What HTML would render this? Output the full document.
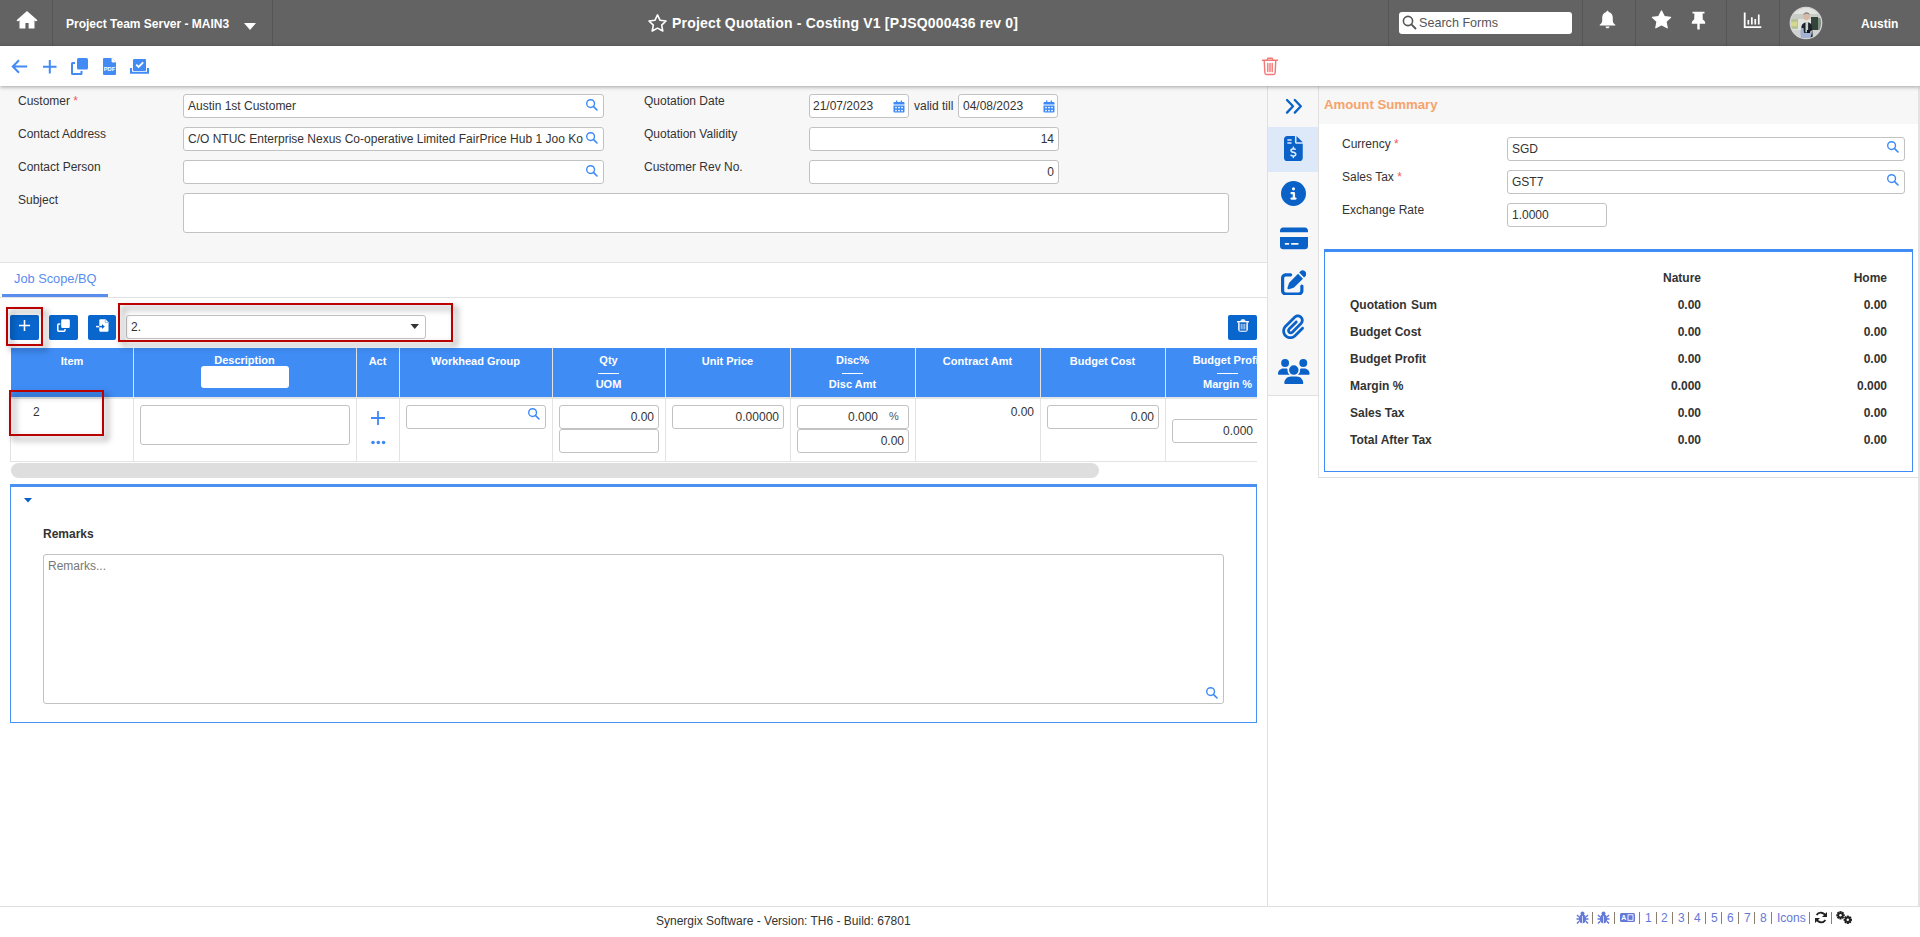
<!DOCTYPE html>
<html><head><meta charset="utf-8">
<style>
html,body{margin:0;padding:0}
body{width:1920px;height:937px;overflow:hidden;position:relative;font-family:"Liberation Sans",sans-serif;background:#fff;color:#333}
.a{position:absolute}
.t12{position:absolute;font-size:12px;line-height:14px;white-space:nowrap}
.b11{position:absolute;font-size:11px;font-weight:bold;line-height:13px;white-space:nowrap}
.b12{position:absolute;font-size:12px;font-weight:bold;line-height:14px;white-space:nowrap}
.inp{position:absolute;background:#fff;border:1px solid #c2c2c2;border-radius:3px;box-sizing:border-box}
.sep{position:absolute;top:0;width:1px;height:46px;background:#565656}
svg{position:absolute;display:block;z-index:6}
</style></head><body>

<!-- HEADER -->
<div class="a" style="left:0;top:0;width:1920px;height:46px;background:#636363"></div>
<div class="sep" style="left:52px"></div>
<div class="sep" style="left:272px"></div>
<div class="sep" style="left:1388px"></div>
<div class="sep" style="left:1582px"></div>
<div class="sep" style="left:1635px"></div>
<div class="sep" style="left:1726px"></div>
<div class="sep" style="left:1779px"></div>
<svg style="left:16px;top:10px" width="22" height="19" viewBox="0 0 22 19"><path fill="#fff" d="M11 1 L21.5 10.2 L20 11.6 L18.5 10.3 L18.5 18.5 L12.6 18.5 L12.6 13 L9.4 13 L9.4 18.5 L3.5 18.5 L3.5 10.3 L2 11.6 L0.5 10.2 Z"/></svg>
<div class="b12" style="left:66px;top:17px;color:#fff">Project Team Server - MAIN3</div>
<svg style="left:243px;top:22px" width="14" height="9" viewBox="0 0 14 9"><path fill="#fff" d="M1 1 L13 1 L7 8 Z"/></svg>
<svg style="left:647px;top:13px" width="21" height="20" viewBox="0 0 21 20"><path fill="none" stroke="#fff" stroke-width="1.6" stroke-linejoin="round" d="M10.5 1.9 L13.1 7.3 L19 8 L14.7 12.1 L15.8 18 L10.5 15.1 L5.2 18 L6.3 12.1 L2 8 L7.9 7.3 Z"/></svg>
<div class="a" style="left:672px;top:15px;font-size:14px;line-height:16px;font-weight:bold;color:#fff;white-space:nowrap;letter-spacing:0.19px">Project Quotation - Costing V1 [PJSQ000436 rev 0]</div>
<div class="a" style="left:1399px;top:12px;width:173px;height:22px;background:#fff;border-radius:3px"></div>
<svg style="left:1402px;top:15px" width="15" height="15" viewBox="0 0 15 15"><circle cx="6" cy="6" r="4.6" fill="none" stroke="#555" stroke-width="1.6"/><path d="M9.4 9.4 L13.5 13.5" stroke="#555" stroke-width="1.8" stroke-linecap="round"/></svg>
<div class="a" style="left:1419px;top:16px;font-size:12.6px;line-height:15px;color:#555;white-space:nowrap">Search Forms</div>
<svg style="left:1599px;top:10px" width="17" height="19" viewBox="0 0 17 19"><path fill="#fff" d="M8.5 0.8 C9.3 0.8 9.6 1.4 9.6 2 C12.3 2.6 13.8 4.8 13.8 7.6 L13.8 11 C13.8 12.4 14.8 13.6 16.3 14.8 L16.3 15.6 L0.7 15.6 L0.7 14.8 C2.2 13.6 3.2 12.4 3.2 11 L3.2 7.6 C3.2 4.8 4.7 2.6 7.4 2 C7.4 1.4 7.7 0.8 8.5 0.8 Z M6.5 16.4 L10.5 16.4 C10.5 17.5 9.6 18.3 8.5 18.3 C7.4 18.3 6.5 17.5 6.5 16.4 Z"/></svg>
<svg style="left:1651px;top:10px" width="21" height="19" viewBox="0 0 21 19"><path fill="#fff" stroke="#fff" stroke-width="1.2" stroke-linejoin="round" d="M10.5 1 L13.3 6.6 L19.6 7.4 L15 11.6 L16.2 17.8 L10.5 14.8 L4.8 17.8 L6 11.6 L1.4 7.4 L7.7 6.6 Z"/></svg>
<svg style="left:1691px;top:11px" width="15" height="19" viewBox="0 0 15 19"><path fill="#fff" d="M1.5 0.8 L13.5 0.8 L13.5 2.6 L11.6 2.6 L11.8 8.5 C13.2 9.4 14.2 10.6 14.2 12 L14.2 12.8 L0.8 12.8 L0.8 12 C0.8 10.6 1.8 9.4 3.2 8.5 L3.4 2.6 L1.5 2.6 Z M6.3 12.8 L8.7 12.8 L8.7 18.5 L6.3 18.5 Z"/></svg>
<svg style="left:1743px;top:12px" width="19" height="17" viewBox="0 0 19 17"><path fill="#fff" d="M0.8 0.5 L2.6 0.5 L2.6 14.3 L18.3 14.3 L18.3 16 L0.8 16 Z M4.5 8 L6.2 8 L6.2 12.6 L4.5 12.6 Z M8 5.2 L9.7 5.2 L9.7 12.6 L8 12.6 Z M11.4 7 L13.1 7 L13.1 12.6 L11.4 12.6 Z M14.9 2.6 L16.6 2.6 L16.6 12.6 L14.9 12.6 Z"/></svg>
<svg style="left:1789px;top:6px" width="34" height="34" viewBox="0 0 34 34">
<defs><clipPath id="av"><circle cx="17" cy="17" r="15.6"/></clipPath></defs>
<g clip-path="url(#av)">
<rect x="0" y="0" width="34" height="34" fill="#e2e4e0"/>
<rect x="0" y="8" width="34" height="5" fill="#c7ccc6"/>
<rect x="1" y="13" width="8" height="10" fill="#b9c39a"/>
<rect x="2" y="16" width="6" height="4" fill="#d6d98c"/>
<rect x="22" y="11" width="7" height="17" fill="#34443a"/>
<rect x="29" y="12" width="4" height="16" fill="#7f8f84"/>
<rect x="0" y="24" width="34" height="10" fill="#cfd2cf"/>
<ellipse cx="17.5" cy="10.5" rx="3" ry="3.8" fill="#d7b9a6"/>
<path d="M14.3 9 C14.2 5.6 20.8 5.4 20.8 9 C19.5 7.8 15.8 7.8 14.3 9 Z" fill="#8e8a88"/>
<path d="M12 34 L12.5 20 C13.5 17 16 16 18 16.2 C20.5 16.4 22.5 17.5 23 20 L24 34 Z" fill="#1f242b"/>
<rect x="16.5" y="16" width="2.6" height="10" fill="#c5d3d1"/>
<path d="M12.5 22 C11 24 11 30 13 33 L21 33 C22 30 23 27 23.5 24 C21 26 18 27 15 27 L14.5 22 Z" fill="#a3b1d3"/>
<rect x="18" y="24" width="3" height="3" fill="#111"/>
</g>
<circle cx="17" cy="17" r="15.7" fill="none" stroke="#d4d4d4" stroke-width="1.3"/>
</svg>
<div class="b12" style="left:1861px;top:17px;color:#fff">Austin</div>


<!-- TOOLBAR -->
<div class="a" style="left:0;top:86px;width:1267px;height:176px;background:#f7f7f7;border-bottom:1px solid #e2e2e2"></div>
<div class="a" style="left:0;top:46px;width:1920px;height:40px;background:#fff;box-shadow:0 1px 4px rgba(0,0,0,0.35);z-index:5"></div>
<svg style="left:11px;top:59px" width="18" height="16" viewBox="0 0 18 16"><path d="M2 7.5 L16.2 7.5 M8 1.3 L1.8 7.5 L8 13.7" fill="none" stroke="#428bf5" stroke-width="2"/></svg>
<svg style="left:42px;top:59px" width="16" height="16" viewBox="0 0 16 16"><path d="M7.8 1 L7.8 14.5 M1 7.8 L14.5 7.8" fill="none" stroke="#428bf5" stroke-width="2"/></svg>
<svg style="left:70px;top:57px" width="19" height="19" viewBox="0 0 19 19"><rect x="7" y="1" width="11" height="11.5" rx="1.5" fill="#428bf5"/><path d="M5 6 L2.5 6 Q2 6 2 6.5 L2 16.5 Q2 17 2.5 17 L11 17 Q11.5 17 11.5 16.5 L11.5 14" fill="none" stroke="#428bf5" stroke-width="2"/></svg>
<svg style="left:102px;top:57px" width="15" height="19" viewBox="0 0 15 19"><path d="M2 1 L10 1 L14 5 L14 17 Q14 18 13 18 L2 18 Q1 18 1 17 L1 2 Q1 1 2 1 Z" fill="#428bf5"/><path d="M10 1 L10 5 L14 5" fill="#fff" stroke="#fff" stroke-width="0.8"/><text x="7.5" y="14.3" font-family="Liberation Sans" font-weight="bold" font-size="5.8" fill="#fff" text-anchor="middle">PDF</text></svg>
<svg style="left:129px;top:58px" width="22" height="18" viewBox="0 0 22 18"><rect x="4" y="1" width="13" height="12" rx="1" fill="#428bf5"/><path d="M7.2 6.6 L9.6 9 L14.2 4.4" fill="none" stroke="#fff" stroke-width="1.8"/><path d="M2 10 L2 14.8 L19 14.8 L19 10" fill="none" stroke="#428bf5" stroke-width="2.1"/></svg>
<svg style="left:1261px;top:57px" width="18" height="19" viewBox="0 0 18 19"><path d="M1.5 3.2 L16.5 3.2 M6 3 L7 1.2 L11 1.2 L12 3 M3.2 3.5 L3.9 16 Q4 17.5 5.5 17.5 L12.5 17.5 Q14 17.5 14.1 16 L14.8 3.5 M6.8 6.5 L6.8 14.5 M9 6.5 L9 14.5 M11.2 6.5 L11.2 14.5" fill="none" stroke="#f47676" stroke-width="1.4" stroke-linecap="round"/></svg>


<!-- FORM -->
<div class="t12" style="left:18px;top:94px">Customer <span style="color:#f05a5a">*</span></div>
<div class="t12" style="left:18px;top:127px">Contact Address</div>
<div class="t12" style="left:18px;top:160px">Contact Person</div>
<div class="t12" style="left:18px;top:193px">Subject</div>
<div class="inp" style="left:183px;top:94px;width:421px;height:24px"></div>
<div class="t12" style="left:188px;top:99px">Austin 1st Customer</div>
<svg style="left:585px;top:98px" width="13" height="13" viewBox="0 0 13 13"><circle cx="5.6" cy="5.6" r="3.9" fill="none" stroke="#3d8af7" stroke-width="1.4"/><path d="M8.4 8.4 L12 12" stroke="#3d8af7" stroke-width="1.6" stroke-linecap="round"/></svg>
<div class="inp" style="left:183px;top:127px;width:421px;height:24px"></div>
<div class="t12" style="left:188px;top:132px">C/O NTUC Enterprise Nexus Co-operative Limited FairPrice Hub 1 Joo Ko</div>
<svg style="left:585px;top:131px" width="13" height="13" viewBox="0 0 13 13"><circle cx="5.6" cy="5.6" r="3.9" fill="none" stroke="#3d8af7" stroke-width="1.4"/><path d="M8.4 8.4 L12 12" stroke="#3d8af7" stroke-width="1.6" stroke-linecap="round"/></svg>
<div class="inp" style="left:183px;top:160px;width:421px;height:24px"></div>
<svg style="left:585px;top:164px" width="13" height="13" viewBox="0 0 13 13"><circle cx="5.6" cy="5.6" r="3.9" fill="none" stroke="#3d8af7" stroke-width="1.4"/><path d="M8.4 8.4 L12 12" stroke="#3d8af7" stroke-width="1.6" stroke-linecap="round"/></svg>
<div class="inp" style="left:183px;top:193px;width:1046px;height:40px"></div>
<div class="t12" style="left:644px;top:94px">Quotation Date</div>
<div class="t12" style="left:644px;top:127px">Quotation Validity</div>
<div class="t12" style="left:644px;top:160px">Customer Rev No.</div>
<div class="inp" style="left:809px;top:94px;width:100px;height:24px"></div>
<div class="t12" style="left:813px;top:99px">21/07/2023</div>
<svg style="left:893px;top:100px" width="12" height="13" viewBox="0 0 12 13"><path d="M3 0.5 L4.3 0.5 L4.3 2 L7.7 2 L7.7 0.5 L9 0.5 L9 2 L10.5 2 Q11.5 2 11.5 3 L11.5 4.5 L0.5 4.5 L0.5 3 Q0.5 2 1.5 2 L3 2 Z M0.5 5.5 L11.5 5.5 L11.5 11.5 Q11.5 12.5 10.5 12.5 L1.5 12.5 Q0.5 12.5 0.5 11.5 Z" fill="#3d8af7"/><g fill="#fff"><circle cx="3" cy="7.6" r="0.9"/><circle cx="6" cy="7.6" r="0.9"/><circle cx="9" cy="7.6" r="0.9"/><circle cx="3" cy="10.6" r="0.9"/><circle cx="6" cy="10.6" r="0.9"/><circle cx="9" cy="10.6" r="0.9"/></g></svg>
<div class="t12" style="left:914px;top:99px">valid till</div>
<div class="inp" style="left:958px;top:94px;width:100px;height:24px"></div>
<div class="t12" style="left:963px;top:99px">04/08/2023</div>
<svg style="left:1043px;top:100px" width="12" height="13" viewBox="0 0 12 13"><path d="M3 0.5 L4.3 0.5 L4.3 2 L7.7 2 L7.7 0.5 L9 0.5 L9 2 L10.5 2 Q11.5 2 11.5 3 L11.5 4.5 L0.5 4.5 L0.5 3 Q0.5 2 1.5 2 L3 2 Z M0.5 5.5 L11.5 5.5 L11.5 11.5 Q11.5 12.5 10.5 12.5 L1.5 12.5 Q0.5 12.5 0.5 11.5 Z" fill="#3d8af7"/><g fill="#fff"><circle cx="3" cy="7.6" r="0.9"/><circle cx="6" cy="7.6" r="0.9"/><circle cx="9" cy="7.6" r="0.9"/><circle cx="3" cy="10.6" r="0.9"/><circle cx="6" cy="10.6" r="0.9"/><circle cx="9" cy="10.6" r="0.9"/></g></svg>
<div class="inp" style="left:809px;top:127px;width:250px;height:24px"></div>
<div class="t12" style="left:809px;top:132px;width:245px;text-align:right">14</div>
<div class="inp" style="left:809px;top:160px;width:250px;height:24px"></div>
<div class="t12" style="left:809px;top:165px;width:245px;text-align:right">0</div>

<!-- TABS -->
<div class="a" style="left:0;top:297px;width:1267px;height:1px;background:#e2e2e2"></div>
<div class="a" style="left:14px;top:271px;font-size:12.8px;line-height:15px;color:#5b8def;white-space:nowrap">Job Scope/BQ</div>
<div class="a" style="left:2px;top:294px;width:106px;height:3px;background:#5b8def"></div>

<!-- BUTTONS -->
<div class="a" style="left:10px;top:315px;width:29px;height:25px;background:#0866cc;border-radius:2px"></div>
<svg style="left:19px;top:320px" width="11" height="11" viewBox="0 0 11 11"><path d="M5.5 0 L5.5 11 M0 5.5 L11 5.5" stroke="#fff" stroke-width="1.6"/></svg>
<div class="a" style="left:49px;top:315px;width:29px;height:25px;background:#0866cc;border-radius:2px"></div>
<svg style="left:56px;top:319px" width="15" height="15" viewBox="0 0 15 15"><rect x="5.2" y="0.3" width="8.6" height="8.8" rx="1.3" fill="#fff"/><path d="M4.3 4.9 L2.7 4.9 Q1.8 4.9 1.8 5.8 L1.8 11.3 Q1.8 12.2 2.7 12.2 L8.1 12.2 Q9 12.2 9 11.3 L9 10" fill="none" stroke="#fff" stroke-width="1.5"/></svg>
<div class="a" style="left:88px;top:315px;width:28px;height:25px;background:#0866cc;border-radius:2px"></div>
<svg style="left:94px;top:318px" width="16" height="16" viewBox="0 0 16 16"><path d="M6.5 1.2 L11.5 1.2 L14.5 4.2 L14.5 12.5 Q14.5 13.7 13.3 13.7 L6.5 13.7 Q5.3 13.7 5.3 12.5 L5.3 2.4 Q5.3 1.2 6.5 1.2 Z" fill="#fff"/><path d="M11.2 1.5 L11.2 4.5 L14.2 4.5" fill="none" stroke="#7fb0e8" stroke-width="0.8"/><path d="M2 8.6 L5.3 8.6" stroke="#fff" stroke-width="1.5"/><path d="M5.3 8.6 L9 8.6" stroke="#0866cc" stroke-width="1.5"/><path d="M8 6.2 L10.8 8.6 L8 11 Z" fill="#0866cc"/></svg>
<div class="inp" style="left:126px;top:315px;width:300px;height:24px"></div>
<div class="t12" style="left:131px;top:320px">2.</div>
<svg style="left:410px;top:323px" width="10" height="7" viewBox="0 0 10 7"><path d="M0.5 1 L9 1 L4.75 6 Z" fill="#333"/></svg>
<div class="a" style="left:1228px;top:315px;width:29px;height:25px;background:#0866cc;border-radius:2px"></div>
<svg style="left:1237px;top:318px" width="12" height="14" viewBox="0 0 12 14"><path d="M3.2 3.6 Q3.4 1.1 6 1.1 Q8.6 1.1 8.8 3.6 Z" fill="#e6eefa"/><path d="M0.6 3.8 L11.4 3.8" stroke="#fff" stroke-width="1.4" stroke-linecap="round"/><path d="M1.9 4.2 L1.9 11.4 Q1.9 13.1 3.6 13.1 L8.4 13.1 Q10.1 13.1 10.1 11.4 L10.1 4.2" fill="none" stroke="#fff" stroke-width="1.5"/><path d="M4.2 5.6 L4.2 11.6 M6 5.6 L6 11.6 M7.8 5.6 L7.8 11.6" stroke="#e0e8f8" stroke-width="0.9"/><path d="M2.6 5 L9.4 5 M2.6 12.2 L9.4 12.2" stroke="#0a55b8" stroke-width="0.8"/></svg>


<!-- TABLE -->
<div class="a" style="left:11px;top:348px;width:1246px;height:49px;background:#3f8cf5"></div>
<div class="a" style="left:133px;top:348px;width:1px;height:49px;background:#e4e4e4"></div><div class="a" style="left:356px;top:348px;width:1px;height:49px;background:#e4e4e4"></div><div class="a" style="left:399px;top:348px;width:1px;height:49px;background:#e4e4e4"></div><div class="a" style="left:552px;top:348px;width:1px;height:49px;background:#e4e4e4"></div><div class="a" style="left:665px;top:348px;width:1px;height:49px;background:#e4e4e4"></div><div class="a" style="left:790px;top:348px;width:1px;height:49px;background:#e4e4e4"></div><div class="a" style="left:915px;top:348px;width:1px;height:49px;background:#e4e4e4"></div><div class="a" style="left:1040px;top:348px;width:1px;height:49px;background:#e4e4e4"></div><div class="a" style="left:1165px;top:348px;width:1px;height:49px;background:#e4e4e4"></div>
<div class="b11" style="left:11px;top:355px;width:122px;text-align:center;color:#fff">Item</div>
<div class="b11" style="left:133px;top:354px;width:223px;text-align:center;color:#fff">Description</div>
<div class="a" style="left:201px;top:366px;width:88px;height:22px;background:#fff;border-radius:3px"></div>
<div class="b11" style="left:356px;top:355px;width:43px;text-align:center;color:#fff">Act</div>
<div class="b11" style="left:399px;top:355px;width:153px;text-align:center;color:#fff">Workhead Group</div>
<div class="b11" style="left:552px;top:354px;width:113px;text-align:center;color:#fff">Qty</div><div class="a" style="left:598px;top:373px;width:21px;height:1px;background:#fff"></div><div class="b11" style="left:552px;top:378px;width:113px;text-align:center;color:#fff">UOM</div>
<div class="b11" style="left:665px;top:355px;width:125px;text-align:center;color:#fff">Unit Price</div>
<div class="b11" style="left:790px;top:354px;width:125px;text-align:center;color:#fff">Disc%</div><div class="a" style="left:842px;top:373px;width:21px;height:1px;background:#fff"></div><div class="b11" style="left:790px;top:378px;width:125px;text-align:center;color:#fff">Disc Amt</div>
<div class="b11" style="left:915px;top:355px;width:125px;text-align:center;color:#fff">Contract Amt</div>
<div class="b11" style="left:1040px;top:355px;width:125px;text-align:center;color:#fff">Budget Cost</div>
<div class="a" style="left:1165px;top:348px;width:92px;height:49px;overflow:hidden">
<div class="b11" style="left:0;top:6px;width:125px;text-align:center;color:#fff">Budget Profit</div>
<div class="a" style="left:52px;top:25px;width:21px;height:1px;background:#fff"></div>
<div class="b11" style="left:0;top:30px;width:125px;text-align:center;color:#fff">Margin %</div>
</div>
<div class="a" style="left:11px;top:397px;width:1246px;height:2px;background:#e5e5e5"></div>
<div class="a" style="left:10px;top:461px;width:1247px;height:1px;background:#e3e3e3"></div>
<div class="a" style="left:10px;top:397px;width:1px;height:65px;background:#e3e3e3"></div><div class="a" style="left:133px;top:397px;width:1px;height:64px;background:#e3e3e3"></div><div class="a" style="left:356px;top:397px;width:1px;height:64px;background:#e3e3e3"></div><div class="a" style="left:399px;top:397px;width:1px;height:64px;background:#e3e3e3"></div><div class="a" style="left:552px;top:397px;width:1px;height:64px;background:#e3e3e3"></div><div class="a" style="left:665px;top:397px;width:1px;height:64px;background:#e3e3e3"></div><div class="a" style="left:790px;top:397px;width:1px;height:64px;background:#e3e3e3"></div><div class="a" style="left:915px;top:397px;width:1px;height:64px;background:#e3e3e3"></div><div class="a" style="left:1040px;top:397px;width:1px;height:64px;background:#e3e3e3"></div><div class="a" style="left:1165px;top:397px;width:1px;height:64px;background:#e3e3e3"></div>
<div class="t12" style="left:33px;top:405px">2</div>
<div class="inp" style="left:140px;top:405px;width:210px;height:40px"></div>
<svg style="left:370px;top:410px" width="16" height="16" viewBox="0 0 16 16"><path d="M8 1 L8 15 M1 8 L15 8" stroke="#3d8af7" stroke-width="1.8"/></svg>
<svg style="left:371px;top:440px" width="15" height="5" viewBox="0 0 15 5"><circle cx="2" cy="2.5" r="1.8" fill="#3d8af7"/><circle cx="7.3" cy="2.5" r="1.8" fill="#3d8af7"/><circle cx="12.6" cy="2.5" r="1.8" fill="#3d8af7"/></svg>
<div class="inp" style="left:406px;top:405px;width:140px;height:24px"></div>
<svg style="left:527px;top:407px" width="13" height="13" viewBox="0 0 13 13"><circle cx="5.6" cy="5.6" r="3.9" fill="none" stroke="#3d8af7" stroke-width="1.4"/><path d="M8.4 8.4 L12 12" stroke="#3d8af7" stroke-width="1.6" stroke-linecap="round"/></svg>
<div class="inp" style="left:559px;top:405px;width:100px;height:24px"></div><div class="t12" style="left:559px;top:410px;width:95px;text-align:right">0.00</div>
<div class="inp" style="left:559px;top:429px;width:100px;height:24px"></div>
<div class="inp" style="left:672px;top:405px;width:112px;height:24px"></div><div class="t12" style="left:672px;top:410px;width:107px;text-align:right">0.00000</div>
<div class="inp" style="left:797px;top:405px;width:112px;height:24px"></div>
<div class="t12" style="left:797px;top:410px;width:81px;text-align:right">0.000</div>
<div class="a" style="left:889px;top:410px;font-size:11px;line-height:13px;color:#555">%</div>
<div class="inp" style="left:797px;top:429px;width:112px;height:24px"></div><div class="t12" style="left:797px;top:434px;width:107px;text-align:right">0.00</div>
<div class="t12" style="left:915px;top:405px;width:119px;text-align:right">0.00</div>
<div class="inp" style="left:1047px;top:405px;width:112px;height:24px"></div><div class="t12" style="left:1047px;top:410px;width:107px;text-align:right">0.00</div>
<div class="a" style="left:1165px;top:398px;width:92px;height:63px;overflow:hidden">
<div class="inp" style="left:7px;top:21px;width:112px;height:24px"></div>
<div class="t12" style="left:7px;top:26px;width:81px;text-align:right">0.000</div>
</div>
<div class="a" style="left:11px;top:463px;width:1088px;height:15px;background:#dedede;border-radius:8px"></div>

<!-- RED BOXES -->
<div class="a" style="left:6px;top:307px;width:33px;height:35px;border:2px solid #bb0000;filter:drop-shadow(4px 4px 3px rgba(0,0,0,0.5))"></div>
<div class="a" style="left:118px;top:303px;width:331px;height:35px;border:2px solid #bb0000;filter:drop-shadow(4px 4px 3px rgba(0,0,0,0.5))"></div>
<div class="a" style="left:9px;top:390px;width:91px;height:42px;border:2px solid #bb0000;filter:drop-shadow(4px 4px 3px rgba(0,0,0,0.5))"></div>

<!-- REMARKS -->
<div class="a" style="left:10px;top:484px;width:1245px;height:235px;border:1px solid #4a90f0;border-top:3px solid #4a90f0"></div>
<svg style="left:23px;top:497px" width="10" height="7" viewBox="0 0 10 7"><path d="M1 1 L9 1 L5 5.5 Z" fill="#0a5fc4"/></svg>
<div class="b12" style="left:43px;top:527px">Remarks</div>
<div class="inp" style="left:43px;top:554px;width:1181px;height:150px"></div>
<div class="t12" style="left:48px;top:559px;color:#777">Remarks...</div>
<svg style="left:1205px;top:686px" width="13" height="13" viewBox="0 0 13 13"><circle cx="5.6" cy="5.6" r="3.9" fill="none" stroke="#3d8af7" stroke-width="1.4"/><path d="M8.4 8.4 L12 12" stroke="#3d8af7" stroke-width="1.6" stroke-linecap="round"/></svg>

<!-- VERTICAL SEPARATOR -->
<div class="a" style="left:1267px;top:86px;width:1px;height:820px;background:#e0e0e0"></div>


<!-- SIDEBAR -->
<div class="a" style="left:1268px;top:86px;width:50px;height:309px;background:#f7f7f7;border-bottom:1px solid #e0e0e0"></div>
<div class="a" style="left:1268px;top:127px;width:50px;height:45px;background:#dde9f8"></div>
<div class="a" style="left:1318px;top:86px;width:1px;height:392px;background:#e0e0e0"></div>
<svg style="left:1285px;top:98px" width="18" height="17" viewBox="0 0 18 17"><path d="M2 2 L8 8.3 L2 14.6 M9.8 2 L15.8 8.3 L9.8 14.6" fill="none" stroke="#0a62c9" stroke-width="2.3" stroke-linecap="round" stroke-linejoin="round"/></svg>
<svg style="left:1284px;top:136px" width="18.75" height="25" viewBox="0 0 384 512"><path fill="#0a62c9" d="M64 0C28.7 0 0 28.7 0 64V448c0 35.3 28.7 64 64 64H320c35.3 0 64-28.7 64-64V160H256c-17.7 0-32-14.300-32-32V0H64zM256 0V128H384L256 0zM64 80c0-8.8 7.2-16 16-16h64c8.8 0 16 7.2 16 16s-7.2 16-16 16H80c-8.8 0-16-7.2-16-16zm0 64c0-8.8 7.2-16 16-16h64c8.8 0 16 7.2 16 16s-7.2 16-16 16H80c-8.8 0-16-7.2-16-16zm128 72c8.8 0 16 7.2 16 16v17.3c8.5 1.2 16.7 3.1 24.1 5.1c8.5 2.3 13.6 11 11.3 19.6s-11 13.6-19.6 11.3c-11.1-3-22-5.2-32.1-5.3c-8.4-.1-17.4 1.8-23.6 5.5c-5.7 3.4-8.1 7.3-8.1 12.8c0 3.7 1.3 6.5 7.3 10.1c6.9 4.1 16.6 7.1 29.2 10.9l.5 .1 0 0 0 0c11.3 3.4 25.3 7.6 36.3 14.6c12.1 7.6 22.4 19.7 22.7 38.2c.3 19.3-9.6 33.3-22.9 41.6c-7.7 4.8-16.4 7.6-25.1 9.1V440c0 8.8-7.2 16-16 16s-16-7.2-16-16V422.2c-11.2-2.1-21.7-5.7-30.9-8.9l0 0c-2.1-.7-4.2-1.4-6.2-2.1c-8.4-2.8-12.9-11.9-10.1-20.2s11.9-12.9 20.2-10.1c2.5 .8 4.8 1.6 7.1 2.4l0 0 0 0 0 0c13.6 4.6 24.6 8.4 36.3 8.7c9.1 .3 17.9-1.7 23.7-5.3c5.1-3.2 7.9-7.3 7.8-14c-.1-4.6-1.8-7.8-7.7-11.6c-6.8-4.3-16.5-7.4-29-11.2l-1.6-.5 0 0c-11-3.3-24.3-7.3-34.8-13.7c-12-7.2-22.6-18.9-22.7-37.3c-.1-19.4 10.8-32.8 23.8-40.5c7.5-4.4 15.8-7.2 24.1-8.7V232c0-8.8 7.2-16 16-16z"/></svg>
<svg style="left:1281px;top:181px" width="25" height="25" viewBox="0 0 512 512"><path fill="#0a62c9" d="M256 512A256 256 0 1 0 256 0a256 256 0 1 0 0 512zM216 336h24V272H216c-13.3 0-24-10.7-24-24s10.7-24 24-24h48c13.3 0 24 10.7 24 24v88h8c13.3 0 24 10.7 24 24s-10.7 24-24 24H216c-13.3 0-24-10.7-24-24s10.7-24 24-24zm40-208a32 32 0 1 1 0 64 32 32 0 1 1 0-64z"/></svg>
<svg style="left:1279.5px;top:225.5px" width="28" height="24.9" viewBox="0 0 576 512"><path fill="#0a62c9" d="M64 32C28.7 32 0 60.7 0 96v32H576V96c0-35.3-28.7-64-64-64H64zM576 224H0V416c0 35.3 28.7 64 64 64H512c35.3 0 64-28.7 64-64V224zM112 352h64c8.8 0 16 7.2 16 16s-7.2 16-16 16H112c-8.8 0-16-7.2-16-16s7.2-16 16-16zm112 16c0-8.8 7.2-16 16-16H368c8.8 0 16 7.2 16 16s-7.2 16-16 16H240c-8.8 0-16-7.2-16-16z"/></svg>
<svg style="left:1280.8px;top:269.7px" width="25.7" height="25.7" viewBox="0 0 512 512"><path fill="#0a62c9" d="M471.6 21.7c-21.9-21.9-57.3-21.9-79.2 0L362.3 51.7l97.9 97.9 30.1-30.1c21.9-21.9 21.9-57.3 0-79.2L471.6 21.7zm-299.2 220c-6.1 6.1-10.8 13.6-13.5 21.9l-29.6 88.8c-2.9 8.6-.6 18.1 5.8 24.6s15.9 8.7 24.6 5.8l88.8-29.6c8.2-2.7 15.7-7.4 21.9-13.5L437.7 172.3 339.7 74.3 172.4 241.7zM96 64C43 64 0 107 0 160V416c0 53 43 96 96 96H352c53 0 96-43 96-96V320c0-17.7-14.3-32-32-32s-32 14.3-32 32v96c0 17.7-14.3 32-32 32H96c-17.7 0-32-14.3-32-32V160c0-17.7 14.3-32 32-32h96c17.7 0 32-14.3 32-32s-14.3-32-32-32H96z"/></svg>
<svg style="left:1282.2px;top:313.7px" width="22.2" height="25.3" viewBox="0 0 448 512"><path fill="#0a62c9" d="M364.2 83.8c-24.4-24.4-64-24.4-88.4 0l-184 184c-42.1 42.1-42.1 110.3 0 152.4s110.3 42.1 152.4 0l152-152c10.9-10.9 28.7-10.9 39.6 0s10.9 28.7 0 39.6l-152 152c-64 64-167.6 64-231.6 0s-64-167.6 0-231.6l184-184c46.3-46.3 121.3-46.3 167.6 0s46.3 121.3 0 167.6l-176 176c-28.6 28.6-75 28.6-103.6 0s-28.6-75 0-103.6l144-144c10.9-10.9 28.7-10.9 39.6 0s10.9 28.7 0 39.6l-144 144c-6.7 6.7-6.7 17.7 0 24.4s17.7 6.7 24.4 0l176-176c24.4-24.4 24.4-64 0-88.4z"/></svg>
<svg style="left:1278.4px;top:358.9px" width="31.6" height="25.3" viewBox="0 0 640 512"><path fill="#0a62c9" d="M144 0a80 80 0 1 1 0 160A80 80 0 1 1 144 0zM512 0a80 80 0 1 1 0 160A80 80 0 1 1 512 0zM0 298.7C0 239.8 47.8 192 106.7 192h42.7c15.9 0 31 3.5 44.6 9.7c-1.3 7.2-1.9 14.7-1.9 22.3c0 38.2 16.8 72.5 43.3 96c-.2 0-.4 0-.7 0H21.3C9.6 320 0 310.4 0 298.7zM405.3 320c-.2 0-.4 0-.7 0c26.6-23.5 43.3-57.8 43.3-96c0-7.6-.7-15-1.9-22.3c13.6-6.3 28.7-9.7 44.6-9.7h42.7C592.2 192 640 239.8 640 298.7c0 11.8-9.6 21.3-21.3 21.3H405.3zM224 224a96 96 0 1 1 192 0 96 96 0 1 1 -192 0zM128 485.3C128 411.7 187.7 352 261.3 352H378.7C452.3 352 512 411.7 512 485.3c0 14.7-11.9 26.7-26.7 26.7H154.7c-14.7 0-26.7-11.9-26.7-26.7z"/></svg>

<!-- AMOUNT SUMMARY -->
<div class="a" style="left:1319px;top:86px;width:599px;height:38px;background:#f7f7f7"></div>
<div class="a" style="left:1324px;top:97px;font-size:13.2px;line-height:15px;font-weight:bold;color:#f5a36b;white-space:nowrap">Amount Summary</div>
<div class="a" style="left:1918px;top:86px;width:2px;height:820px;background:#e3e3e3"></div>
<div class="t12" style="left:1342px;top:137px">Currency <span style="color:#f05a5a">*</span></div>
<div class="t12" style="left:1342px;top:170px">Sales Tax <span style="color:#f05a5a">*</span></div>
<div class="t12" style="left:1342px;top:203px">Exchange Rate</div>
<div class="inp" style="left:1507px;top:137px;width:398px;height:24px"></div>
<div class="t12" style="left:1512px;top:142px">SGD</div>
<svg style="left:1886px;top:140px" width="13" height="13" viewBox="0 0 13 13"><circle cx="5.6" cy="5.6" r="3.9" fill="none" stroke="#3d8af7" stroke-width="1.4"/><path d="M8.4 8.4 L12 12" stroke="#3d8af7" stroke-width="1.6" stroke-linecap="round"/></svg>
<div class="inp" style="left:1507px;top:170px;width:398px;height:24px"></div>
<div class="t12" style="left:1512px;top:175px">GST7</div>
<svg style="left:1886px;top:173px" width="13" height="13" viewBox="0 0 13 13"><circle cx="5.6" cy="5.6" r="3.9" fill="none" stroke="#3d8af7" stroke-width="1.4"/><path d="M8.4 8.4 L12 12" stroke="#3d8af7" stroke-width="1.6" stroke-linecap="round"/></svg>
<div class="inp" style="left:1507px;top:203px;width:100px;height:24px"></div>
<div class="t12" style="left:1512px;top:208px">1.0000</div>
<div class="a" style="left:1324px;top:249px;width:587px;height:219px;border:1px solid #3f8cf5;border-top:3px solid #3f8cf5"></div>
<div class="b12" style="left:1600px;top:271px;width:101px;text-align:right">Nature</div>
<div class="b12" style="left:1787px;top:271px;width:100px;text-align:right">Home</div>
<div class="b12" style="left:1350px;top:298px"><span style="word-spacing:1px">Quotation Sum</span></div><div class="b12" style="left:1600px;top:298px;width:101px;text-align:right">0.00</div><div class="b12" style="left:1787px;top:298px;width:100px;text-align:right">0.00</div>
<div class="b12" style="left:1350px;top:325px">Budget Cost</div><div class="b12" style="left:1600px;top:325px;width:101px;text-align:right">0.00</div><div class="b12" style="left:1787px;top:325px;width:100px;text-align:right">0.00</div>
<div class="b12" style="left:1350px;top:352px">Budget Profit</div><div class="b12" style="left:1600px;top:352px;width:101px;text-align:right">0.00</div><div class="b12" style="left:1787px;top:352px;width:100px;text-align:right">0.00</div>
<div class="b12" style="left:1350px;top:379px">Margin %</div><div class="b12" style="left:1600px;top:379px;width:101px;text-align:right">0.000</div><div class="b12" style="left:1787px;top:379px;width:100px;text-align:right">0.000</div>
<div class="b12" style="left:1350px;top:406px">Sales Tax</div><div class="b12" style="left:1600px;top:406px;width:101px;text-align:right">0.00</div><div class="b12" style="left:1787px;top:406px;width:100px;text-align:right">0.00</div>
<div class="b12" style="left:1350px;top:433px">Total After Tax</div><div class="b12" style="left:1600px;top:433px;width:101px;text-align:right">0.00</div><div class="b12" style="left:1787px;top:433px;width:100px;text-align:right">0.00</div>

<div class="a" style="left:1318px;top:477px;width:600px;height:1px;background:#e0e0e0"></div>

<!-- FOOTER -->
<div class="a" style="left:0;top:906px;width:1920px;height:1px;background:#e0e0e0"></div>
<div class="t12" style="left:656px;top:914px">Synergix Software - Version: TH6 - Build: 67801</div>

<!-- FOOTER LINKS -->
<svg style="left:1576px;top:911px" width="13" height="13" viewBox="0 0 13 13"><circle cx="6.5" cy="2.6" r="2" fill="#6478d6"/><ellipse cx="6.5" cy="7.8" rx="3.6" ry="4.4" fill="#6478d6"/><path d="M1 4 L3 6 M12 4 L10 6 M0.5 8 L3 8 M12.5 8 L10 8 M1 12.5 L3.2 10.2 M12 12.5 L9.8 10.2" stroke="#6478d6" stroke-width="1.4"/><path d="M6.5 5 L6.5 12" stroke="#fff" stroke-width="0.7"/></svg><div class="a" style="left:1592px;top:912px;width:1px;height:12px;background:#8c7f72"></div><svg style="left:1597px;top:911px" width="13" height="13" viewBox="0 0 13 13"><circle cx="6.5" cy="2.6" r="2" fill="#6478d6"/><ellipse cx="6.5" cy="7.8" rx="3.6" ry="4.4" fill="#6478d6"/><path d="M1 4 L3 6 M12 4 L10 6 M0.5 8 L3 8 M12.5 8 L10 8 M1 12.5 L3.2 10.2 M12 12.5 L9.8 10.2" stroke="#6478d6" stroke-width="1.4"/><path d="M6.5 5 L6.5 12" stroke="#fff" stroke-width="0.7"/></svg><div class="a" style="left:1614px;top:912px;width:1px;height:12px;background:#8c7f72"></div><svg style="left:1620px;top:913px" width="15" height="9" viewBox="0 0 15 9"><rect x="0" y="0" width="15" height="9" rx="1.5" fill="#6478d6"/><text x="3.8" y="7.3" font-family="Liberation Sans" font-weight="bold" font-size="7" fill="#fff" text-anchor="middle">A</text><rect x="8" y="1.8" width="5" height="5.5" fill="none" stroke="#fff" stroke-width="0.9"/></svg><div class="a" style="left:1639px;top:912px;width:1px;height:12px;background:#8c7f72"></div><div class="t12" style="left:1645px;top:911px;color:#6478d6">1</div><div class="a" style="left:1656px;top:912px;width:1px;height:12px;background:#8c7f72"></div><div class="t12" style="left:1661px;top:911px;color:#6478d6">2</div><div class="a" style="left:1672px;top:912px;width:1px;height:12px;background:#8c7f72"></div><div class="t12" style="left:1678px;top:911px;color:#6478d6">3</div><div class="a" style="left:1688px;top:912px;width:1px;height:12px;background:#8c7f72"></div><div class="t12" style="left:1694px;top:911px;color:#6478d6">4</div><div class="a" style="left:1705px;top:912px;width:1px;height:12px;background:#8c7f72"></div><div class="t12" style="left:1711px;top:911px;color:#6478d6">5</div><div class="a" style="left:1721px;top:912px;width:1px;height:12px;background:#8c7f72"></div><div class="t12" style="left:1727px;top:911px;color:#6478d6">6</div><div class="a" style="left:1738px;top:912px;width:1px;height:12px;background:#8c7f72"></div><div class="t12" style="left:1744px;top:911px;color:#6478d6">7</div><div class="a" style="left:1754px;top:912px;width:1px;height:12px;background:#8c7f72"></div><div class="t12" style="left:1760px;top:911px;color:#6478d6">8</div><div class="a" style="left:1771px;top:912px;width:1px;height:12px;background:#8c7f72"></div><div class="t12" style="left:1777px;top:911px;color:#6478d6">Icons</div><div class="a" style="left:1809px;top:912px;width:1px;height:12px;background:#8c7f72"></div><svg style="left:1814px;top:911px" width="14" height="13" viewBox="0 0 14 13"><path d="M11.5 5 A5 5 0 0 0 2.6 4" fill="none" stroke="#222" stroke-width="1.8"/><path d="M13 1 L13 6 L8 6 Z" fill="#222"/><path d="M2.5 8 A5 5 0 0 0 11.4 9" fill="none" stroke="#222" stroke-width="1.8"/><path d="M1 12 L1 7 L6 7 Z" fill="#222"/></svg><div class="a" style="left:1831px;top:912px;width:1px;height:12px;background:#8c7f72"></div><svg style="left:1836px;top:911px" width="17" height="13" viewBox="0 0 17 13"><rect x="3.4" y="0.09999999999999987" width="2.2" height="8.4" fill="#222" transform="rotate(0 4.5 4.3)"/><rect x="3.4" y="0.09999999999999987" width="2.2" height="8.4" fill="#222" transform="rotate(45 4.5 4.3)"/><rect x="3.4" y="0.09999999999999987" width="2.2" height="8.4" fill="#222" transform="rotate(90 4.5 4.3)"/><rect x="3.4" y="0.09999999999999987" width="2.2" height="8.4" fill="#222" transform="rotate(135 4.5 4.3)"/><circle cx="4.5" cy="4.3" r="2.9" fill="#222"/><circle cx="4.5" cy="4.3" r="1.218" fill="#fff"/><rect x="10.700000000000001" y="4.6000000000000005" width="2.2" height="8.4" fill="#222" transform="rotate(0 11.8 8.8)"/><rect x="10.700000000000001" y="4.6000000000000005" width="2.2" height="8.4" fill="#222" transform="rotate(45 11.8 8.8)"/><rect x="10.700000000000001" y="4.6000000000000005" width="2.2" height="8.4" fill="#222" transform="rotate(90 11.8 8.8)"/><rect x="10.700000000000001" y="4.6000000000000005" width="2.2" height="8.4" fill="#222" transform="rotate(135 11.8 8.8)"/><circle cx="11.8" cy="8.8" r="2.9" fill="#222"/><circle cx="11.8" cy="8.8" r="1.218" fill="#fff"/></svg>
</body></html>
